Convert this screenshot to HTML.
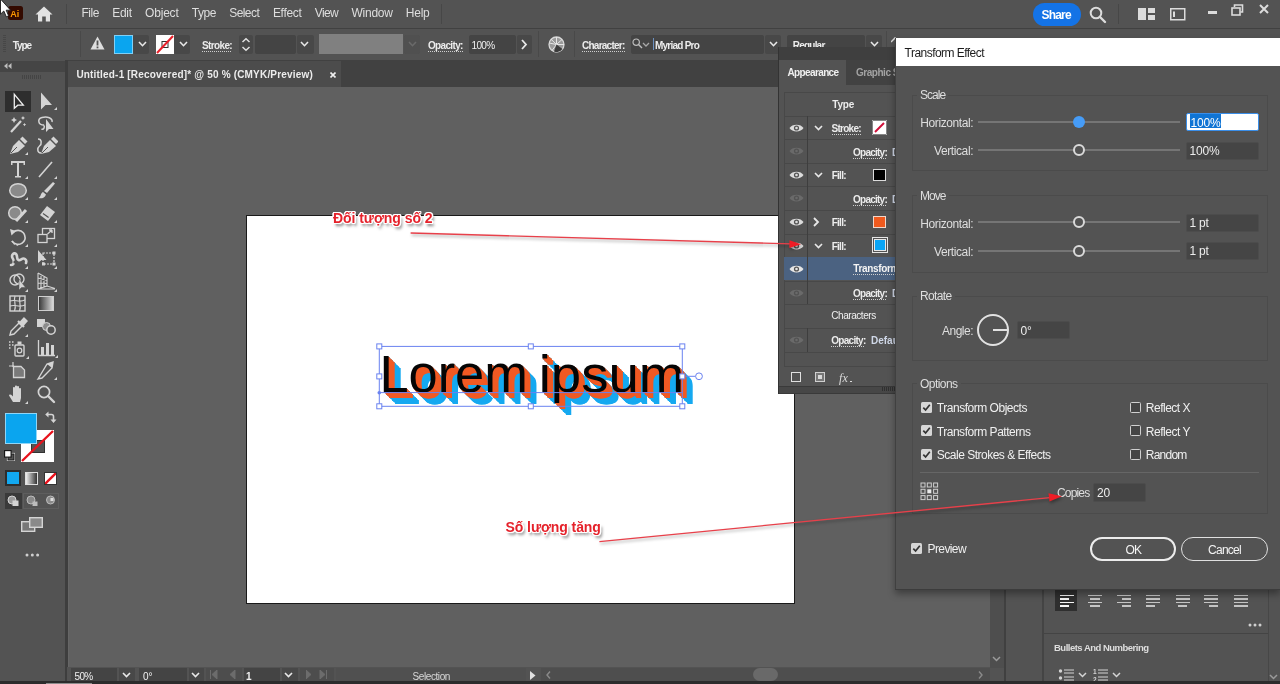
<!DOCTYPE html>
<html><head><meta charset="utf-8"><title>Illustrator</title>
<style>
*{box-sizing:border-box;margin:0;padding:0}
html,body{width:1280px;height:684px;overflow:hidden;background:#535353;font-family:"Liberation Sans","DejaVu Sans",sans-serif;color:#e6e6e6;font-size:11px}
.abs{position:absolute}
#root{position:relative;width:1280px;height:684px;overflow:hidden;background:#535353;will-change:transform}
/* menubar */
#menubar{left:0;top:0;width:1280px;height:28px;background:#535353}
#menubar .mi{position:absolute;top:6px;font-size:12px;line-height:14px;color:#e4e4e4;letter-spacing:-0.55px}
/* control bar */
#ctrl{left:0;top:28px;width:1280px;height:33px;background:#535353;border-bottom:1px solid #3c3c3c}
.lbl{position:absolute;font-size:10px;font-weight:bold;color:#ececec;letter-spacing:-0.65px;white-space:nowrap}
.dot{border-bottom:1px dotted #cfcfcf}
.fld{position:absolute;background:#454545;border-radius:2px}
/* tab strip */
#tabs{left:67px;top:60px;width:1213px;height:28px;background:#414141;border-bottom:1.5px solid #3e3e3e}
#tab1{left:0;top:0;width:282px;height:27px;background:#535353}
/* canvas */
#canvas{left:67px;top:87px;width:923px;height:580px;background:#606060}
#tools{left:0;top:60px;width:65px;height:624px;background:#535353}
</style></head>
<body><div id="root">
<div id="menubar" class="abs">
<span class="abs" style="left:81.40px;top:7.34px;font-size:12px;line-height:12px;font-weight:400;color:#dedede;letter-spacing:-0.461px;white-space:pre;">File</span>
<span class="abs" style="left:112.20px;top:7.34px;font-size:12px;line-height:12px;font-weight:400;color:#dedede;letter-spacing:-0.297px;white-space:pre;">Edit</span>
<span class="abs" style="left:145.00px;top:7.34px;font-size:12px;line-height:12px;font-weight:400;color:#dedede;letter-spacing:-0.181px;white-space:pre;">Object</span>
<span class="abs" style="left:191.80px;top:7.34px;font-size:12px;line-height:12px;font-weight:400;color:#dedede;letter-spacing:-0.454px;white-space:pre;">Type</span>
<span class="abs" style="left:229.20px;top:7.34px;font-size:12px;line-height:12px;font-weight:400;color:#dedede;letter-spacing:-0.560px;white-space:pre;">Select</span>
<span class="abs" style="left:272.95px;top:7.34px;font-size:12px;line-height:12px;font-weight:400;color:#dedede;letter-spacing:-0.336px;white-space:pre;">Effect</span>
<span class="abs" style="left:314.70px;top:7.34px;font-size:12px;line-height:12px;font-weight:400;color:#dedede;letter-spacing:-0.599px;white-space:pre;">View</span>
<span class="abs" style="left:351.40px;top:7.34px;font-size:12px;line-height:12px;font-weight:400;color:#dedede;letter-spacing:-0.215px;white-space:pre;">Window</span>
<span class="abs" style="left:405.80px;top:7.34px;font-size:12px;line-height:12px;font-weight:400;color:#dedede;letter-spacing:-0.247px;white-space:pre;">Help</span>
<svg class="abs" style="left:8px;top:6px" width="15" height="14" viewBox="0 0 15 14"><rect width="15" height="14" rx="2.5" fill="#330a00"/><text x="2.3" y="10.8" font-family="Liberation Sans,sans-serif" font-weight="bold" font-size="9" fill="#ff9a00">Ai</text></svg>
<svg class="abs" style="left:35px;top:6px" width="18" height="16" viewBox="0 0 18 16"><path d="M9 0.5 L17.5 8.5 H15 V15.5 H10.8 V10.5 H7.2 V15.5 H3 V8.5 H0.5 Z" fill="#e2e2e2"/></svg>
<div class="abs" style="left:66px;top:4px;width:1px;height:20px;background:#474747"></div>
<div class="abs" style="left:441px;top:4px;width:1px;height:20px;background:#474747"></div>
<div class="abs" style="left:1033px;top:2.5px;width:47.5px;height:23.5px;border-radius:12px;background:#1473e6"></div><span class="abs" style="left:1041.50px;top:9.24px;font-size:12px;line-height:12px;font-weight:700;color:#fff;letter-spacing:-0.812px;white-space:pre;">Share</span>
<svg class="abs" style="left:1088px;top:5px" width="20" height="20" viewBox="0 0 20 20"><circle cx="8" cy="8" r="5.3" fill="none" stroke="#dcdcdc" stroke-width="2"/><path d="M12 12 L17 17" stroke="#dcdcdc" stroke-width="2.4" stroke-linecap="round"/></svg>
<div class="abs" style="left:1118px;top:4px;width:1px;height:20px;background:#474747"></div>
<svg class="abs" style="left:1138px;top:8px" width="18" height="13" viewBox="0 0 18 13"><rect x="0" y="0" width="8" height="12" fill="#dcdcdc"/><rect x="10" y="0" width="7" height="5" fill="#dcdcdc"/><rect x="10" y="7" width="7" height="5" fill="#dcdcdc"/></svg>
<svg class="abs" style="left:1170px;top:8px" width="16" height="13" viewBox="0 0 16 13"><rect x="0.75" y="0.75" width="14" height="11" fill="none" stroke="#dcdcdc" stroke-width="1.5"/><rect x="3" y="3.5" width="2" height="5.5" fill="#dcdcdc"/></svg>
<div class="abs" style="left:1208px;top:11px;width:9px;height:3px;background:#dcdcdc"></div>
<svg class="abs" style="left:1231px;top:4px" width="13" height="12" viewBox="0 0 13 12"><path d="M3.5 3 V1 H11.5 V8 H9.5" fill="none" stroke="#dcdcdc" stroke-width="1.6"/><rect x="1" y="4" width="8" height="7" fill="none" stroke="#dcdcdc" stroke-width="1.6"/></svg>
<svg class="abs" style="left:1259px;top:4px" width="10" height="10" viewBox="0 0 10 10"><path d="M1 1 L9 9 M9 1 L1 9" stroke="#dcdcdc" stroke-width="2"/></svg>
</div>
<svg class="abs" style="left:0;top:0;z-index:50" width="14" height="20" viewBox="0 0 14 20"><path d="M0.5 -1 V14.2 L3.8 11 L6.3 16.8 L8.6 15.8 L6.2 10.2 H10.6 Z" fill="#fff" stroke="#1a1a1a" stroke-width=".9"/></svg>

<div id="ctrl" class="abs"><div class="abs" style="left:0;top:0;width:1280px;height:1px;background:#414141"></div>

<div class="abs" style="left:3px;top:7px;width:3px;height:17px;background:repeating-linear-gradient(#474747 0 1px,#535353 1px 2px)"></div>
<div class="abs" style="left:80px;top:3px;width:1px;height:26px;background:#494949"></div>
<svg class="abs" style="left:90px;top:8px" width="15" height="14" viewBox="0 0 15 14"><path d="M7.5 0.5 L14.5 13.5 H0.5 Z" fill="#dedede"/><rect x="6.6" y="4.5" width="1.8" height="5" fill="#535353"/><rect x="6.6" y="10.5" width="1.8" height="1.8" fill="#535353"/></svg>
<div class="abs" style="left:114px;top:7px;width:19px;height:19px;background:#0aa5ef;border:1px solid #7fd0f7"></div>
<div class="fld" style="left:133px;top:7px;width:16px;height:19px;background:#484848"></div><svg class="abs" style="left:137.5px;top:13.3px" width="9" height="7" viewBox="-1 -1 9 7"><path d="M0 0 L3.5 3.7 L7 0" fill="none" stroke="#e8e8e8" stroke-width="1.6"/></svg>
<svg class="abs" style="left:156px;top:7px" width="18" height="19" viewBox="0 0 18 19"><rect width="18" height="19" fill="#fff"/><rect x="6" y="6.5" width="6" height="6" fill="none" stroke="#333" stroke-width="1"/><path d="M1 18 L17 1" stroke="#e8202a" stroke-width="2"/></svg>
<div class="fld" style="left:174px;top:7px;width:16px;height:19px;background:#484848"></div><svg class="abs" style="left:178.5px;top:13.3px" width="9" height="7" viewBox="-1 -1 9 7"><path d="M0 0 L3.5 3.7 L7 0" fill="none" stroke="#e8e8e8" stroke-width="1.6"/></svg>
<div class="fld" style="left:239px;top:7px;width:14px;height:19px;background:#484848"></div>
<svg class="abs" style="left:241px;top:9px" width="10" height="15" viewBox="0 0 10 15"><path d="M1.5 5 L5 1.8 L8.5 5 M1.5 10 L5 13.2 L8.5 10" fill="none" stroke="#e0e0e0" stroke-width="1.5"/></svg>
<div class="fld" style="left:255px;top:7px;width:41px;height:19px;background:#444"></div>
<div class="fld" style="left:297px;top:7px;width:17px;height:19px;background:#484848"></div><svg class="abs" style="left:299.5px;top:13.3px" width="9" height="7" viewBox="-1 -1 9 7"><path d="M0 0 L3.5 3.7 L7 0" fill="none" stroke="#e8e8e8" stroke-width="1.6"/></svg>
<div class="abs" style="left:319px;top:6px;width:84px;height:20px;background:#808080"></div>
<div class="fld" style="left:404px;top:7px;width:16px;height:19px;background:#505050"></div><svg class="abs" style="left:407.5px;top:13.3px" width="9" height="7" viewBox="-1 -1 9 7"><path d="M0 0 L3.5 3.7 L7 0" fill="none" stroke="#6a6a6a" stroke-width="1.6"/></svg>
<div class="fld" style="left:469px;top:7px;width:47px;height:19px;background:#444"></div>
<div class="fld" style="left:517px;top:7px;width:15px;height:19px;background:#484848"></div>
<svg class="abs" style="left:521px;top:11px" width="7" height="11" viewBox="0 0 7 11"><path d="M1 1 L5 5.5 L1 10" fill="none" stroke="#e8e8e8" stroke-width="1.8"/></svg>
<div class="abs" style="left:538px;top:3px;width:1px;height:26px;background:#494949"></div>
<svg class="abs" style="left:548px;top:8px" width="17" height="17" viewBox="0 0 17 17"><circle cx="8.5" cy="8.5" r="7.5" fill="#9a9a9a" stroke="#d8d8d8" stroke-width="1.3"/><path d="M8.5 8.5 L8.5 1 M8.5 8.5 L14 3.5 M8.5 8.5 L16 8.5 M8.5 8.5 L3 3.2 M8.5 8.5 L1.2 7 M8.5 8.5 L4 14.5" stroke="#e6e6e6" stroke-width="1"/><path d="M8.5 8.5 L14.5 13 A7.5 7.5 0 0 1 6 15.6 Z" fill="#3c3c3c"/></svg>
<div class="abs" style="left:574px;top:3px;width:1px;height:26px;background:#494949"></div>
<div class="fld" style="left:631px;top:7px;width:133px;height:19px;background:#444"></div>
<svg class="abs" style="left:632px;top:10px" width="11" height="11" viewBox="0 0 11 11"><circle cx="4.2" cy="4.2" r="3.2" fill="none" stroke="#bdbdbd" stroke-width="1.2"/><path d="M6.5 6.5 L10 10" stroke="#bdbdbd" stroke-width="1.4"/></svg><svg class="abs" style="left:642px;top:14px" width="8" height="6" viewBox="-1 -1 8 6"><path d="M0 0 L3.0 3 L6 0" fill="none" stroke="#a8a8a8" stroke-width="1.3"/></svg>
<div class="abs" style="left:653px;top:10px;width:1px;height:12px;background:#6a8fc0"></div>
<div class="fld" style="left:765px;top:7px;width:16px;height:19px;background:#484848"></div><svg class="abs" style="left:768.5px;top:13.3px" width="9" height="7" viewBox="-1 -1 9 7"><path d="M0 0 L3.5 3.7 L7 0" fill="none" stroke="#e8e8e8" stroke-width="1.6"/></svg>
<div class="fld" style="left:787px;top:7px;width:78px;height:19px;background:#444"></div>
<div class="fld" style="left:866px;top:7px;width:16px;height:19px;background:#484848"></div><svg class="abs" style="left:869.5px;top:13.3px" width="9" height="7" viewBox="-1 -1 9 7"><path d="M0 0 L3.5 3.7 L7 0" fill="none" stroke="#e8e8e8" stroke-width="1.6"/></svg>
<div class="abs" style="left:886px;top:3px;width:1px;height:26px;background:#494949"></div>
<svg class="abs" style="left:891px;top:9px" width="8" height="6" viewBox="0 0 8 6"><path d="M0 5 L4 1 L8 5" fill="none" stroke="#d8d8d8" stroke-width="1.5"/></svg>
<span class="abs" style="left:12.80px;top:13.23px;font-size:10px;line-height:10px;font-weight:700;color:#ececec;letter-spacing:-1.102px;white-space:pre;">Type</span>
<span class="abs" style="left:202.00px;top:13.23px;font-size:10px;line-height:10px;font-weight:700;color:#ececec;letter-spacing:-0.636px;white-space:pre;">Stroke:</span><div class="abs" style="left:202.0px;top:23.0px;width:30.0px;height:1px;background:repeating-linear-gradient(90deg,#cfcfcf 0 1px,transparent 1px 2px)"></div>
<span class="abs" style="left:428.00px;top:13.23px;font-size:10px;line-height:10px;font-weight:700;color:#ececec;letter-spacing:-0.664px;white-space:pre;">Opacity:</span><div class="abs" style="left:428.0px;top:23.0px;width:34.7px;height:1px;background:repeating-linear-gradient(90deg,#cfcfcf 0 1px,transparent 1px 2px)"></div>
<span class="abs" style="left:471.50px;top:13.23px;font-size:10px;line-height:10px;font-weight:400;color:#f0f0f0;letter-spacing:-0.670px;white-space:pre;">100%</span>
<span class="abs" style="left:582.00px;top:13.23px;font-size:10px;line-height:10px;font-weight:700;color:#ececec;letter-spacing:-0.753px;white-space:pre;">Character:</span><div class="abs" style="left:582.0px;top:23.0px;width:42.5px;height:1px;background:repeating-linear-gradient(90deg,#cfcfcf 0 1px,transparent 1px 2px)"></div>
<span class="abs" style="left:655.00px;top:13.23px;font-size:10px;line-height:10px;font-weight:700;color:#ececec;letter-spacing:-0.769px;white-space:pre;">Myriad Pro</span>
<span class="abs" style="left:792.80px;top:13.23px;font-size:10px;line-height:10px;font-weight:700;color:#ececec;letter-spacing:-0.791px;white-space:pre;">Regular</span>
</div>

<div id="tabs" class="abs">
<div id="tab1" class="abs" style="left:1px;top:1px;width:273px;height:25.5px;background:#4c4c4c"></div>
<span class="abs" style="left:9.40px;top:9.83px;font-size:10px;line-height:10px;font-weight:700;color:#ececec;letter-spacing:0.188px;white-space:pre;">Untitled-1 [Recovered]* @ 50 % (CMYK/Preview)</span><svg class="abs" style="left:262.5px;top:11.5px" width="6" height="6" viewBox="0 0 6 6"><path d="M0.5 0.5 L5.5 5.5 M5.5 0.5 L0.5 5.5" stroke="#f0f0f0" stroke-width="1.6"/></svg>
</div>

<div id="canvas" class="abs">
<div class="abs" style="left:179px;top:128px;width:549px;height:389px;background:#fff;border:1px solid #1a1a1a"></div>
<svg class="abs" style="left:300px;top:240px" width="420" height="100" viewBox="367 327 420 100" font-family="Liberation Sans, sans-serif" font-size="52.4">
<g transform="translate(379.4,392.2) scale(1,1)"><text x="12.00" y="12.00" fill="#16a9f0">Lorem</text><text fill="#16a9f0" transform="translate(171.30,12.00) scale(1.042,1)">ipsum</text><text x="11.40" y="11.40" fill="#16a9f0">Lorem</text><text fill="#16a9f0" transform="translate(170.70,11.40) scale(1.042,1)">ipsum</text><text x="10.80" y="10.80" fill="#16a9f0">Lorem</text><text fill="#16a9f0" transform="translate(170.10,10.80) scale(1.042,1)">ipsum</text><text x="10.20" y="10.20" fill="#16a9f0">Lorem</text><text fill="#16a9f0" transform="translate(169.50,10.20) scale(1.042,1)">ipsum</text><text x="9.60" y="9.60" fill="#16a9f0">Lorem</text><text fill="#16a9f0" transform="translate(168.90,9.60) scale(1.042,1)">ipsum</text><text x="9.00" y="9.00" fill="#16a9f0">Lorem</text><text fill="#16a9f0" transform="translate(168.30,9.00) scale(1.042,1)">ipsum</text><text x="8.40" y="8.40" fill="#16a9f0">Lorem</text><text fill="#16a9f0" transform="translate(167.70,8.40) scale(1.042,1)">ipsum</text><text x="7.80" y="7.80" fill="#16a9f0">Lorem</text><text fill="#16a9f0" transform="translate(167.10,7.80) scale(1.042,1)">ipsum</text><text x="7.20" y="7.20" fill="#16a9f0">Lorem</text><text fill="#16a9f0" transform="translate(166.50,7.20) scale(1.042,1)">ipsum</text><text x="6.60" y="6.60" fill="#16a9f0">Lorem</text><text fill="#16a9f0" transform="translate(165.90,6.60) scale(1.042,1)">ipsum</text><text x="6.00" y="6.00" fill="#16a9f0">Lorem</text><text fill="#16a9f0" transform="translate(165.30,6.00) scale(1.042,1)">ipsum</text><text x="5.40" y="5.40" fill="#16a9f0">Lorem</text><text fill="#16a9f0" transform="translate(164.70,5.40) scale(1.042,1)">ipsum</text><text x="4.80" y="4.80" fill="#16a9f0">Lorem</text><text fill="#16a9f0" transform="translate(164.10,4.80) scale(1.042,1)">ipsum</text><text x="4.20" y="4.20" fill="#16a9f0">Lorem</text><text fill="#16a9f0" transform="translate(163.50,4.20) scale(1.042,1)">ipsum</text><text x="3.60" y="3.60" fill="#16a9f0">Lorem</text><text fill="#16a9f0" transform="translate(162.90,3.60) scale(1.042,1)">ipsum</text><text x="3.00" y="3.00" fill="#16a9f0">Lorem</text><text fill="#16a9f0" transform="translate(162.30,3.00) scale(1.042,1)">ipsum</text><text x="2.40" y="2.40" fill="#16a9f0">Lorem</text><text fill="#16a9f0" transform="translate(161.70,2.40) scale(1.042,1)">ipsum</text><text x="1.80" y="1.80" fill="#16a9f0">Lorem</text><text fill="#16a9f0" transform="translate(161.10,1.80) scale(1.042,1)">ipsum</text><text x="1.20" y="1.20" fill="#16a9f0">Lorem</text><text fill="#16a9f0" transform="translate(160.50,1.20) scale(1.042,1)">ipsum</text><text x="0.60" y="0.60" fill="#16a9f0">Lorem</text><text fill="#16a9f0" transform="translate(159.90,0.60) scale(1.042,1)">ipsum</text><text x="6.00" y="6.00" fill="#f15a24">Lorem</text><text fill="#f15a24" transform="translate(165.30,6.00) scale(1.042,1)">ipsum</text><text x="5.40" y="5.40" fill="#f15a24">Lorem</text><text fill="#f15a24" transform="translate(164.70,5.40) scale(1.042,1)">ipsum</text><text x="4.80" y="4.80" fill="#f15a24">Lorem</text><text fill="#f15a24" transform="translate(164.10,4.80) scale(1.042,1)">ipsum</text><text x="4.20" y="4.20" fill="#f15a24">Lorem</text><text fill="#f15a24" transform="translate(163.50,4.20) scale(1.042,1)">ipsum</text><text x="3.60" y="3.60" fill="#f15a24">Lorem</text><text fill="#f15a24" transform="translate(162.90,3.60) scale(1.042,1)">ipsum</text><text x="3.00" y="3.00" fill="#f15a24">Lorem</text><text fill="#f15a24" transform="translate(162.30,3.00) scale(1.042,1)">ipsum</text><text x="2.40" y="2.40" fill="#f15a24">Lorem</text><text fill="#f15a24" transform="translate(161.70,2.40) scale(1.042,1)">ipsum</text><text x="1.80" y="1.80" fill="#f15a24">Lorem</text><text fill="#f15a24" transform="translate(161.10,1.80) scale(1.042,1)">ipsum</text><text x="1.20" y="1.20" fill="#f15a24">Lorem</text><text fill="#f15a24" transform="translate(160.50,1.20) scale(1.042,1)">ipsum</text><text x="0.60" y="0.60" fill="#f15a24">Lorem</text><text fill="#f15a24" transform="translate(159.90,0.60) scale(1.042,1)">ipsum</text><text x="0.00" y="0.00" fill="#050505">Lorem</text><text fill="#050505" transform="translate(159.30,0.00) scale(1.042,1)">ipsum</text></g>
<rect x="379.3" y="346.4" width="302.99999999999994" height="59.900000000000034" fill="none" stroke="#6a82f0" stroke-width="1"/>
<path d="M379.3 392.6 H682.3 M685.3 376.3 H695.4" stroke="#6a82f0" stroke-width="1" fill="none"/>
<circle cx="699" cy="376.3" r="3.4" fill="#fff" stroke="#6a82f0" stroke-width="1"/>
<circle cx="379.3" cy="392.8" r="1.8" fill="#6a82f0"/>
<rect x="376.8" y="343.9" width="5" height="5" fill="#fff" stroke="#6a82f0" stroke-width="1"/><rect x="376.8" y="373.9" width="5" height="5" fill="#fff" stroke="#6a82f0" stroke-width="1"/><rect x="376.8" y="403.8" width="5" height="5" fill="#fff" stroke="#6a82f0" stroke-width="1"/><rect x="528.3" y="343.9" width="5" height="5" fill="#fff" stroke="#6a82f0" stroke-width="1"/><rect x="528.3" y="403.8" width="5" height="5" fill="#fff" stroke="#6a82f0" stroke-width="1"/><rect x="679.8" y="343.9" width="5" height="5" fill="#fff" stroke="#6a82f0" stroke-width="1"/><rect x="679.8" y="373.9" width="5" height="5" fill="#fff" stroke="#6a82f0" stroke-width="1"/><rect x="679.8" y="403.8" width="5" height="5" fill="#fff" stroke="#6a82f0" stroke-width="1"/>
</svg>
</div>

<div id="tools" class="abs">
<div class="abs" style="left:0;top:1px;width:65px;height:11px;background:#454545"></div>
<div class="abs" style="left:65px;top:0;width:3px;height:624px;background:#3e3e3e"></div><div class="abs" style="left:68px;top:28px;width:1px;height:580px;background:#666"></div>
<svg class="abs" style="left:4px;top:3px" width="8" height="6" viewBox="0 0 8 6"><path d="M3.5 0 V6 L0 3 Z M7.5 0 V6 L4 3 Z" fill="#bdbdbd"/></svg>
<div class="abs" style="left:22px;top:15px;width:19px;height:4px;background:repeating-linear-gradient(90deg,#444 0 1px,#535353 1px 2px)"></div>
<div class="abs" style="left:5px;top:31px;width:26px;height:21px;background:#2e2e2e"></div><svg class="abs" style="left:6.0px;top:30.0px" width="24" height="22" viewBox="0 0 24 22"><path d="M8.3 4.3 V18.3 L11.8 15.2 H17.3 Z" fill="none" stroke="#f0f0f0" stroke-width="1.3" stroke-linejoin="miter"/></svg><svg class="abs" style="left:34.0px;top:30.0px" width="24" height="22" viewBox="0 0 24 22"><path d="M7 2.5 V19.5 L11.5 15 H18 Z" fill="#d4d4d4"/><path d="M23 17 V20 H20 Z" fill="#d4d4d4"/></svg><svg class="abs" style="left:6.0px;top:53.0px" width="24" height="22" viewBox="0 0 24 22"><path d="M5 19 L15 8" stroke="#d4d4d4" stroke-width="2.2"/><path d="M8 4 l1 2 2 1 -2 1 -1 2 -1 -2 -2 -1 2 -1z M17 3 l.7 1.3 1.3 .7 -1.3 .7 -.7 1.3 -.7 -1.3 -1.3 -.7 1.3 -.7z M18.5 10 l.6 1 1 .6 -1 .6 -.6 1 -.6 -1 -1 -.6 1 -.6z" fill="#d4d4d4"/></svg><svg class="abs" style="left:34.0px;top:53.0px" width="24" height="22" viewBox="0 0 24 22"><path d="M10 12 C4 12 3 6 8 4.5 C13 3 19 5 18 9 M9.5 12 c2 2 0 5 -2 4" fill="none" stroke="#d4d4d4" stroke-width="1.5"/><path d="M12 6 V19 L15 16 H19.5 Z" fill="#d4d4d4"/></svg><svg class="abs" style="left:6.0px;top:75.0px" width="24" height="22" viewBox="0 0 24 22"><path d="M4 19 L7 11 L13 5 L19 11 L12 17 Z" fill="#d4d4d4"/><path d="M14 4 L16.5 1.5 L21.5 6.5 L19 9 Z" fill="#d4d4d4"/><path d="M5 18 L11 12" stroke="#535353" stroke-width="1"/><path d="M22 17 V20 H19 Z" fill="#d4d4d4"/></svg><svg class="abs" style="left:34.0px;top:75.0px" width="24" height="22" viewBox="0 0 24 22"><g transform="translate(3,0)"><path d="M4 19 L7 11 L13 5 L19 11 L12 17 Z" fill="#d4d4d4"/><path d="M14 4 L16.5 1.5 L21.5 6.5 L19 9 Z" fill="#d4d4d4"/><path d="M5 18 L11 12" stroke="#535353" stroke-width="1"/></g><path d="M4 4 C8 4 8 9 5.5 11 C3 13 3 18 7 18" fill="none" stroke="#d4d4d4" stroke-width="1.5"/></svg><svg class="abs" style="left:6.0px;top:98.0px" width="24" height="22" viewBox="0 0 24 22"><path d="M5 3 H19 V7 H17.5 V5 H13 V18 H15 V19.5 H9 V18 H11 V5 H6.5 V7 H5 Z" fill="#d4d4d4"/><path d="M22 18 V21 H19 Z" fill="#d4d4d4"/></svg><svg class="abs" style="left:34.0px;top:98.0px" width="24" height="22" viewBox="0 0 24 22"><path d="M5 19 L18 4" stroke="#d4d4d4" stroke-width="1.6"/><path d="M23 18 V21 H20 Z" fill="#d4d4d4"/></svg><svg class="abs" style="left:6.0px;top:120.0px" width="24" height="22" viewBox="0 0 24 22"><ellipse cx="12" cy="10.5" rx="8.3" ry="6.8" fill="#8a8a8a" stroke="#d4d4d4" stroke-width="1.5"/><path d="M22 17 V20 H19 Z" fill="#d4d4d4"/></svg><svg class="abs" style="left:34.0px;top:120.0px" width="24" height="22" viewBox="0 0 24 22"><path d="M19 2 L21 3.5 L13 13 L10 11 Z" fill="#d4d4d4"/><path d="M9 12 L12 14.5 C11 18 7 19 4.5 18 C7 17 6.5 13 9 12 Z" fill="#d4d4d4"/><path d="M23 17 V20 H20 Z" fill="#d4d4d4"/></svg><svg class="abs" style="left:6.0px;top:143.0px" width="24" height="22" viewBox="0 0 24 22"><circle cx="9" cy="10" r="6.3" fill="#8a8a8a" stroke="#d4d4d4" stroke-width="1.5"/><path d="M10 18 L20 7" stroke="#d4d4d4" stroke-width="3"/><path d="M22 17 V20 H19 Z" fill="#d4d4d4"/></svg><svg class="abs" style="left:34.0px;top:143.0px" width="24" height="22" viewBox="0 0 24 22"><path d="M13 3 L21 9 L14 18 L6 12 Z" fill="#d4d4d4"/><path d="M7.2 12.8 L12.8 17" stroke="#535353" stroke-width="1.2" transform="translate(1.8,-2.4)"/><path d="M23 17 V20 H20 Z" fill="#d4d4d4"/></svg><svg class="abs" style="left:6.0px;top:166.0px" width="24" height="22" viewBox="0 0 24 22"><path d="M7 6.5 A7 7 0 1 1 6 15" fill="none" stroke="#d4d4d4" stroke-width="1.6" stroke-dasharray="14 0"/><path d="M6 15 A7 7 0 0 0 12 19" fill="none" stroke="#d4d4d4" stroke-width="1.4" stroke-dasharray="1.5 1.5"/><path d="M4 3 L10 5 L5.5 9.5 Z" fill="#d4d4d4"/><path d="M22 18 V21 H19 Z" fill="#d4d4d4"/></svg><svg class="abs" style="left:34.0px;top:166.0px" width="24" height="22" viewBox="0 0 24 22"><rect x="8.5" y="2.5" width="12" height="10" fill="none" stroke="#d4d4d4" stroke-width="1.3"/><rect x="4" y="8.5" width="9" height="8" fill="#535353" stroke="#d4d4d4" stroke-width="1.3"/><path d="M13.5 8 L18 4 M18 4 h-3 M18 4 v3" stroke="#d4d4d4" stroke-width="1.3" fill="none"/><path d="M23 18 V21 H20 Z" fill="#d4d4d4"/></svg><svg class="abs" style="left:6.0px;top:188.0px" width="24" height="22" viewBox="0 0 24 22"><path d="M5 17 C9 17 8 12 6.5 10 C5 7 8 4 10 6 C12 8 10 11 12.5 12 C15 13 16 9 19 11 C21 12.5 20 15 20 15" fill="none" stroke="#d4d4d4" stroke-width="2.6" stroke-linecap="round"/><circle cx="9" cy="14" r="1.6" fill="#535353"/><path d="M22 18 V21 H19 Z" fill="#d4d4d4"/></svg><svg class="abs" style="left:34.0px;top:188.0px" width="24" height="22" viewBox="0 0 24 22"><rect x="9" y="5" width="11" height="11" fill="none" stroke="#d4d4d4" stroke-width="1.2" stroke-dasharray="2 1"/><path d="M4 2 V15 L7.5 12 H12.5 Z" fill="#d4d4d4"/><rect x="18.5" y="3.5" width="3" height="3" fill="#d4d4d4"/><rect x="18.5" y="14.5" width="3" height="3" fill="#d4d4d4"/><rect x="8" y="14.5" width="3" height="3" fill="#d4d4d4"/><path d="M23 18 V21 H20 Z" fill="#d4d4d4"/></svg><svg class="abs" style="left:6.0px;top:211.0px" width="24" height="22" viewBox="0 0 24 22"><circle cx="9" cy="9" r="5" fill="none" stroke="#d4d4d4" stroke-width="1.4"/><circle cx="13" cy="8" r="5" fill="none" stroke="#d4d4d4" stroke-width="1.4"/><path d="M13 8 V19 L15.5 16.5 H19.5 Z" fill="#d4d4d4" stroke="#535353" stroke-width=".5"/><path d="M22 18 V21 H19 Z" fill="#d4d4d4"/></svg><svg class="abs" style="left:34.0px;top:211.0px" width="24" height="22" viewBox="0 0 24 22"><path d="M4 2 V18 H21 M4 2 L13 7 V15 L4 18 M7 3.7 V17 M10 5.3 V16 M4 7 L13 9.5 M4 12 L13 12.5 M13 15 L21 17.5" fill="none" stroke="#d4d4d4" stroke-width="1.1"/><path d="M23 18 V21 H20 Z" fill="#d4d4d4"/></svg><svg class="abs" style="left:6.0px;top:233.0px" width="24" height="22" viewBox="0 0 24 22"><rect x="4" y="3" width="15" height="15" fill="none" stroke="#d4d4d4" stroke-width="1.4"/><path d="M4 8 C9 6 13 10 19 7 M4 13 C9 11 13 15 19 12 M9 3 C7 8 11 12 8.5 18 M14 3 C12 8 16 12 13.5 18" fill="none" stroke="#d4d4d4" stroke-width="1.2"/></svg><div class="abs" style="left:38px;top:236px;width:16px;height:15px;border:1px solid #cfcfcf;background:linear-gradient(90deg,#3a3a3a,#d8d8d8)"></div><svg class="abs" style="left:6.0px;top:256.0px" width="24" height="22" viewBox="0 0 24 22"><path d="M4 19 L5 15 L13 7 L16 10 L8 18 Z" fill="none" stroke="#d4d4d4" stroke-width="1.4"/><path d="M12 5 L18 11 M14 7 L18 2.5 L20.5 5 L16.5 9.5" stroke="#d4d4d4" stroke-width="2.2" fill="#d4d4d4"/><path d="M22 18 V21 H19 Z" fill="#d4d4d4"/></svg><svg class="abs" style="left:34.0px;top:256.0px" width="24" height="22" viewBox="0 0 24 22"><rect x="3" y="3" width="8" height="8" fill="#d4d4d4"/><circle cx="12.5" cy="10.5" r="4" fill="#8a8a8a" stroke="#d4d4d4" stroke-width="1"/><circle cx="17" cy="14" r="4.2" fill="#535353" stroke="#d4d4d4" stroke-width="1.5"/></svg><svg class="abs" style="left:6.0px;top:278.0px" width="24" height="22" viewBox="0 0 24 22"><rect x="9" y="7" width="9" height="11" rx="1" fill="none" stroke="#d4d4d4" stroke-width="1.4"/><rect x="11.5" y="3.5" width="4" height="3" fill="#d4d4d4"/><circle cx="13.5" cy="12.5" r="2.3" fill="none" stroke="#d4d4d4" stroke-width="1.2"/><path d="M3 4 h1.5 M6 4 h1.5 M3 7 h1.5 M6 7 h1.5 M3 10 h1.5" stroke="#d4d4d4" stroke-width="1.5"/><path d="M23 18 V21 H20 Z" fill="#d4d4d4"/></svg><svg class="abs" style="left:34.0px;top:278.0px" width="24" height="22" viewBox="0 0 24 22"><path d="M4.5 2 V17.5 H21" fill="none" stroke="#d4d4d4" stroke-width="1.3"/><rect x="7" y="9" width="3" height="8" fill="#d4d4d4"/><rect x="12" y="5" width="3" height="12" fill="#d4d4d4"/><rect x="17" y="7" width="3" height="10" fill="#d4d4d4"/><path d="M24 17 V20 H21 Z" fill="#d4d4d4"/></svg><svg class="abs" style="left:6.0px;top:300.0px" width="24" height="22" viewBox="0 0 24 22"><path d="M7 2 V7 M3 6 H8" stroke="#d4d4d4" stroke-width="1.2"/><path d="M7.5 6.5 H15 L18.5 10 V17.5 H7.5 Z" fill="#7a7a7a" stroke="#d4d4d4" stroke-width="1.3"/></svg><svg class="abs" style="left:34.0px;top:300.0px" width="24" height="22" viewBox="0 0 24 22"><path d="M4 19 L13 4 L19 2 L18 8 L8 18 Z" fill="none" stroke="#d4d4d4" stroke-width="1.4"/><path d="M13 4 L19 2 L18 8 Z" fill="#d4d4d4"/><path d="M23 17 V20 H20 Z" fill="#d4d4d4"/></svg><svg class="abs" style="left:6.0px;top:323.0px" width="24" height="22" viewBox="0 0 24 22"><path d="M7 19 L3 12.5 C3 11 5 11 6 12.5 L7 13.5 V5 C7 3.7 9 3.7 9 5 V9.5 V3.5 C9 2.2 11 2.2 11 3.5 V9.5 V4 C11 2.7 13 2.7 13 4 V10 V6 C13 4.8 15 4.8 15 6 V15 L14 19 Z" fill="#d4d4d4"/><path d="M22 18 V21 H19 Z" fill="#d4d4d4"/></svg><svg class="abs" style="left:34.0px;top:323.0px" width="24" height="22" viewBox="0 0 24 22"><circle cx="10" cy="9" r="5.6" fill="none" stroke="#d4d4d4" stroke-width="1.7"/><path d="M14 13 L20 19" stroke="#d4d4d4" stroke-width="2.4" stroke-linecap="round"/></svg>
<div class="abs" style="left:21px;top:370px;width:33px;height:32px;background:#fff"></div>
<div class="abs" style="left:31px;top:380px;width:14px;height:13px;background:#535353;border:1px solid #333"></div>
<svg class="abs" style="left:21px;top:370px" width="33" height="32" viewBox="0 0 33 32"><path d="M1 31 L32 1" stroke="#e8121c" stroke-width="2.4"/></svg>
<div class="abs" style="left:5px;top:353px;width:32px;height:31px;background:#0aa5ef;border:1px solid #8fd6f8"></div>
<svg class="abs" style="left:45px;top:351px" width="12" height="13" viewBox="0 0 12 13"><path d="M3 3.5 H6.5 Q8.5 3.5 8.5 5.5 V9" fill="none" stroke="#d4d4d4" stroke-width="1.6"/><path d="M3.5 0.5 V6.5 L0.2 3.5 Z M5.5 8.5 H11.5 L8.5 12 Z" fill="#d4d4d4"/></svg>
<svg class="abs" style="left:4px;top:390px" width="11" height="11" viewBox="0 0 11 11"><rect x="3.7" y="3.7" width="6.6" height="6.6" fill="none" stroke="#111" stroke-width="1.4"/><rect x="3.2" y="3.2" width="7.6" height="7.6" fill="none" stroke="#eee" stroke-width=".6"/><rect x="0.6" y="0.6" width="6.5" height="6.5" fill="#fff" stroke="#111" stroke-width="1.1"/></svg>
<div class="abs" style="left:5px;top:410px;width:16px;height:16px;background:#2e2e2e"></div>
<div class="abs" style="left:7px;top:412px;width:12px;height:12px;background:#12a8f0"></div>
<div class="abs" style="left:25px;top:412px;width:13px;height:13px;border:1px solid #ddd;background:linear-gradient(90deg,#eee,#333)"></div>
<svg class="abs" style="left:44px;top:412px" width="13" height="13" viewBox="0 0 13 13"><rect width="13" height="13" fill="#fff"/><path d="M0.5 12.5 L12.5 0.5" stroke="#e8121c" stroke-width="2.4"/><rect x=".5" y=".5" width="12" height="12" fill="none" stroke="#333" stroke-width="1"/></svg>
<div class="abs" style="left:5px;top:433px;width:17px;height:16px;background:#3a3a3a"></div>
<div class="abs" style="left:23px;top:433px;width:36px;height:16px;border:1px solid #5e5e5e"></div>
<svg class="abs" style="left:7px;top:435px" width="13" height="12" viewBox="0 0 13 12"><circle cx="5" cy="5" r="4" fill="#9a9a9a" stroke="#d4d4d4" stroke-width="1"/><rect x="5.5" y="5.5" width="6" height="5.5" fill="#d4d4d4"/></svg>
<svg class="abs" style="left:26px;top:435px" width="13" height="12" viewBox="0 0 13 12"><circle cx="5" cy="5" r="4" fill="#8a8a8a" stroke="#bcbcbc" stroke-width="1"/><rect x="6.5" y="6.5" width="5" height="4.5" fill="#bcbcbc"/></svg>
<svg class="abs" style="left:45px;top:435px" width="13" height="12" viewBox="0 0 13 12"><circle cx="5.5" cy="5" r="4" fill="#8a8a8a" stroke="#bcbcbc" stroke-width="1"/><rect x="5.5" y="3" width="3" height="3" fill="#ddd"/></svg>
<svg class="abs" style="left:21px;top:457px" width="22" height="15" viewBox="0 0 22 15"><rect x="0.7" y="4.7" width="13" height="9.6" fill="#777" stroke="#d4d4d4" stroke-width="1.4"/><rect x="8.7" y="0.7" width="12.6" height="9.6" fill="#8a8a8a" stroke="#d4d4d4" stroke-width="1.4"/></svg>
<svg class="abs" style="left:25px;top:493px" width="15" height="4" viewBox="0 0 15 4"><circle cx="2" cy="2" r="1.5" fill="#cfcfcf"/><circle cx="7.3" cy="2" r="1.5" fill="#cfcfcf"/><circle cx="12.6" cy="2" r="1.5" fill="#cfcfcf"/></svg>
</div>

<div class="abs" style="left:67px;top:667px;width:923px;height:14px;background:#535353"></div>
<div class="abs" style="left:71px;top:668px;width:46px;height:13px;background:#444"></div>
<span class="abs" style="left:74.50px;top:672.24px;font-size:10px;line-height:10px;font-weight:400;color:#f0f0f0;letter-spacing:-0.672px;white-space:pre;">50%</span>
<div class="abs" style="left:119px;top:668px;width:16px;height:13px;background:#484848"></div>
<svg class="abs" style="left:122px;top:672px" width="9" height="6.6" viewBox="-1 -1 9 6.6"><path d="M0 0 L3.5 3.5999999999999996 L7 0" fill="none" stroke="#e8e8e8" stroke-width="1.6"/></svg>
<div class="abs" style="left:139px;top:668px;width:48px;height:13px;background:#444"></div>
<span class="abs" style="left:143.00px;top:672.24px;font-size:10px;line-height:10px;font-weight:400;color:#f0f0f0;letter-spacing:0.000px;white-space:pre;">0°</span>
<div class="abs" style="left:189px;top:668px;width:15px;height:13px;background:#484848"></div>
<svg class="abs" style="left:191px;top:672px" width="9" height="6.6" viewBox="-1 -1 9 6.6"><path d="M0 0 L3.5 3.5999999999999996 L7 0" fill="none" stroke="#e8e8e8" stroke-width="1.6"/></svg>
<div class="abs" style="left:206px;top:668px;width:36px;height:13px;background:#4d4d4d"></div>
<svg class="abs" style="left:210px;top:670px" width="28" height="9" viewBox="0 0 28 9"><path d="M0.5 0 V9 M7 0 V9 L2 4.5 Z M25 0 V9 L20 4.5 Z" fill="#6c6c6c" stroke="#6c6c6c" stroke-width="1"/></svg>
<div class="abs" style="left:244px;top:668px;width:36px;height:13px;background:#444"></div>
<span class="abs" style="left:246.00px;top:672.24px;font-size:10px;line-height:10px;font-weight:700;color:#f0f0f0;letter-spacing:0.000px;white-space:pre;">1</span>
<div class="abs" style="left:282px;top:668px;width:16px;height:13px;background:#484848"></div>
<svg class="abs" style="left:284px;top:672px" width="9" height="6.6" viewBox="-1 -1 9 6.6"><path d="M0 0 L3.5 3.5999999999999996 L7 0" fill="none" stroke="#e8e8e8" stroke-width="1.6"/></svg>
<div class="abs" style="left:300px;top:668px;width:34px;height:13px;background:#4d4d4d"></div>
<svg class="abs" style="left:306px;top:670px" width="22" height="9" viewBox="0 0 22 9"><path d="M0 0 V9 L5 4.5 Z M14 0 V9 L19 4.5 Z M20.5 0 V9" fill="#6c6c6c" stroke="#6c6c6c" stroke-width="1"/></svg>
<div class="abs" style="left:336px;top:668px;width:190px;height:13px;background:#505050"></div>
<span class="abs" style="left:412.50px;top:672.24px;font-size:10px;line-height:10px;font-weight:400;color:#d8d8d8;letter-spacing:-0.405px;white-space:pre;">Selection</span>
<svg class="abs" style="left:530px;top:671px" width="6" height="9" viewBox="0 0 6 9"><path d="M0 0 V9 L5.5 4.5 Z" fill="#e0e0e0"/></svg>
<div class="abs" style="left:541px;top:668px;width:449px;height:13px;background:#4e4e4e"></div>
<svg class="abs" style="left:546px;top:671px" width="5" height="8" viewBox="0 0 5 8"><path d="M4 0.5 L1 4 L4 7.5" fill="none" stroke="#8a8a8a" stroke-width="1.4"/></svg>
<svg class="abs" style="left:978px;top:671px" width="5" height="8" viewBox="0 0 5 8"><path d="M1 0.5 L4 4 L1 7.5" fill="none" stroke="#8a8a8a" stroke-width="1.4"/></svg>
<div class="abs" style="left:753px;top:668px;width:25px;height:13px;border-radius:6.5px;background:#696969"></div>
<div class="abs" style="left:990px;top:87px;width:14px;height:581px;background:#4e4e4e"></div>
<svg class="abs" style="left:992px;top:656px" width="9" height="6.5" viewBox="-1 -1 9 6.5"><path d="M0 0 L3.5 3.5 L7 0" fill="none" stroke="#9a9a9a" stroke-width="1.5"/></svg>
<div class="abs" style="left:1004px;top:60px;width:276px;height:624px;background:#535353"></div>
<div class="abs" style="left:1004px;top:60px;width:2px;height:624px;background:#404040"></div>
<div class="abs" style="left:1042px;top:60px;width:2px;height:624px;background:#444"></div>
<div class="abs" style="left:1044px;top:633px;width:224px;height:1px;background:#444"></div>
<div class="abs" style="left:1268px;top:60px;width:1px;height:624px;background:#474747"></div>
<svg class="abs" style="left:1269px;top:674px" width="9" height="6.5" viewBox="-1 -1 9 6.5"><path d="M0 0 L3.5 3.5 L7 0" fill="none" stroke="#9a9a9a" stroke-width="1.5"/></svg>
<div class="abs" style="left:1055px;top:589px;width:22px;height:22px;background:#2f2f2f"></div>
<div class="abs" style="left:1060px;top:594.5px;width:14px;height:1.6px;background:#f4f4f4"></div><div class="abs" style="left:1060px;top:598px;width:9px;height:1.6px;background:#f4f4f4"></div><div class="abs" style="left:1060px;top:601.5px;width:14px;height:1.6px;background:#f4f4f4"></div><div class="abs" style="left:1060px;top:605px;width:9px;height:1.6px;background:#f4f4f4"></div>
<div class="abs" style="left:1088.0px;top:594.5px;width:14px;height:1.6px;background:#c4c4c4"></div><div class="abs" style="left:1090.0px;top:598px;width:10px;height:1.6px;background:#c4c4c4"></div><div class="abs" style="left:1088.0px;top:601.5px;width:14px;height:1.6px;background:#c4c4c4"></div><div class="abs" style="left:1090.0px;top:605px;width:10px;height:1.6px;background:#c4c4c4"></div>
<div class="abs" style="left:1117px;top:594.5px;width:14px;height:1.6px;background:#c4c4c4"></div><div class="abs" style="left:1122px;top:598px;width:9px;height:1.6px;background:#c4c4c4"></div><div class="abs" style="left:1117px;top:601.5px;width:14px;height:1.6px;background:#c4c4c4"></div><div class="abs" style="left:1122px;top:605px;width:9px;height:1.6px;background:#c4c4c4"></div>
<div class="abs" style="left:1146px;top:594.5px;width:14px;height:1.6px;background:#c4c4c4"></div><div class="abs" style="left:1146px;top:598px;width:14px;height:1.6px;background:#c4c4c4"></div><div class="abs" style="left:1146px;top:601.5px;width:14px;height:1.6px;background:#c4c4c4"></div><div class="abs" style="left:1146px;top:605px;width:9px;height:1.6px;background:#c4c4c4"></div>
<div class="abs" style="left:1175.5px;top:594.5px;width:14px;height:1.6px;background:#c4c4c4"></div><div class="abs" style="left:1175.5px;top:598px;width:14px;height:1.6px;background:#c4c4c4"></div><div class="abs" style="left:1175.5px;top:601.5px;width:14px;height:1.6px;background:#c4c4c4"></div><div class="abs" style="left:1178.0px;top:605px;width:9px;height:1.6px;background:#c4c4c4"></div>
<div class="abs" style="left:1204px;top:594.5px;width:14px;height:1.6px;background:#c4c4c4"></div><div class="abs" style="left:1204px;top:598px;width:14px;height:1.6px;background:#c4c4c4"></div><div class="abs" style="left:1204px;top:601.5px;width:14px;height:1.6px;background:#c4c4c4"></div><div class="abs" style="left:1209px;top:605px;width:9px;height:1.6px;background:#c4c4c4"></div>
<div class="abs" style="left:1233.5px;top:594.5px;width:14px;height:1.6px;background:#c4c4c4"></div><div class="abs" style="left:1233.5px;top:598px;width:14px;height:1.6px;background:#c4c4c4"></div><div class="abs" style="left:1233.5px;top:601.5px;width:14px;height:1.6px;background:#c4c4c4"></div><div class="abs" style="left:1233.5px;top:605px;width:14px;height:1.6px;background:#c4c4c4"></div>
<svg class="abs" style="left:1248px;top:623px" width="14" height="4" viewBox="0 0 14 4"><circle cx="2" cy="2" r="1.5" fill="#cfcfcf"/><circle cx="7" cy="2" r="1.5" fill="#cfcfcf"/><circle cx="12" cy="2" r="1.5" fill="#cfcfcf"/></svg>
<span class="abs" style="left:1054.00px;top:643.16px;font-size:9.5px;line-height:9.5px;font-weight:700;color:#dedede;letter-spacing:-0.510px;white-space:pre;">Bullets And Numbering</span>
<svg class="abs" style="left:1058px;top:668px" width="64" height="14" viewBox="0 0 64 14"><circle cx="2.5" cy="3" r="1.7" fill="#d4d4d4"/><circle cx="2.5" cy="10" r="1.7" fill="#d4d4d4"/><path d="M6 2 H16 M6 5 H16 M6 9 H16 M6 12 H16" stroke="#d4d4d4" stroke-width="1.2"/><path d="M21 5 L24.5 8.5 L28 5" fill="none" stroke="#d4d4d4" stroke-width="1.5"/><path d="M40 2 H50 M40 5 H50 M40 9 H50 M40 12 H50" stroke="#d4d4d4" stroke-width="1.2"/><text x="35" y="6" font-size="6.5" font-weight="bold" fill="#d4d4d4" font-family="Liberation Sans,sans-serif">1</text><text x="35" y="13.5" font-size="6.5" font-weight="bold" fill="#d4d4d4" font-family="Liberation Sans,sans-serif">2</text><path d="M55 5 L58.5 8.5 L62 5" fill="none" stroke="#d4d4d4" stroke-width="1.5"/></svg>
<div class="abs" style="left:0;top:681px;width:1280px;height:3px;background:#2c2c2c"></div>
<div class="abs" style="left:46px;top:683px;width:46px;height:1px;background:#8c8c8c"></div>

<div id="appear" class="abs" style="left:778px;top:47px;width:140px;height:347px;background:#535353;border-left:1px solid #333;overflow:hidden">
<div class="abs" style="left:0;top:0;width:140px;height:13px;background:#3f3f3f"></div>
<div class="abs" style="left:0;top:13px;width:140px;height:25px;background:#424242"></div>
<div class="abs" style="left:0;top:13px;width:67px;height:25px;background:#535353"></div>
<span class="abs" style="left:8.50px;top:20.73px;font-size:10px;line-height:10px;font-weight:700;color:#f0f0f0;letter-spacing:-0.625px;white-space:pre;">Appearance</span>
<span class="abs" style="left:77.00px;top:20.73px;font-size:10px;line-height:10px;font-weight:700;color:#a2a2a2;letter-spacing:-0.472px;white-space:pre;">Graphic S</span>
<div class="abs" style="left:5px;top:45px;width:130px;height:275px;border:1px solid #484848;border-right:none"></div>
<div class="abs" style="left:5px;top:68.6px;width:130px;height:1px;background:#484848"></div>
<div class="abs" style="left:5px;top:92.2px;width:130px;height:1px;background:#484848"></div>
<div class="abs" style="left:5px;top:115.8px;width:130px;height:1px;background:#484848"></div>
<div class="abs" style="left:5px;top:139.4px;width:130px;height:1px;background:#484848"></div>
<div class="abs" style="left:5px;top:163.0px;width:130px;height:1px;background:#484848"></div>
<div class="abs" style="left:5px;top:186.6px;width:130px;height:1px;background:#484848"></div>
<div class="abs" style="left:5px;top:210.2px;width:130px;height:1px;background:#484848"></div>
<div class="abs" style="left:5px;top:233.8px;width:130px;height:1px;background:#484848"></div>
<div class="abs" style="left:5px;top:257.4px;width:130px;height:1px;background:#484848"></div>
<div class="abs" style="left:5px;top:281.0px;width:130px;height:1px;background:#484848"></div>
<div class="abs" style="left:5px;top:304.6px;width:130px;height:1px;background:#484848"></div>
<div class="abs" style="left:5px;top:209.6px;width:130px;height:23.8px;background:#4b6281"></div>
<div class="abs" style="left:28px;top:68.6px;width:1px;height:188.8px;background:#3e3e3e"></div>
<div class="abs" style="left:28px;top:281.0px;width:1px;height:23.6px;background:#3e3e3e"></div>
<span class="abs" style="left:53.30px;top:52.94px;font-size:10px;line-height:10px;font-weight:700;color:#ececec;letter-spacing:-0.177px;white-space:pre;">Type</span>
<svg class="abs" style="left:9.5px;top:75.6px" width="15" height="10" viewBox="0 0 15 10"><path d="M0.5 5 C3 0.5 12 0.5 14.5 5 C12 9.5 3 9.5 0.5 5 Z" fill="#dcdcdc"/><circle cx="7.5" cy="5" r="2.6" fill="#535353"/><circle cx="7.5" cy="5" r="1.3" fill="#dcdcdc"/></svg>
<svg class="abs" style="left:35px;top:77.6px" width="9" height="6.6" viewBox="-1 -1 9 6.6"><path d="M0 0 L3.5 3.5999999999999996 L7 0" fill="none" stroke="#e8e8e8" stroke-width="1.6"/></svg>
<span class="abs" style="left:52.60px;top:76.73px;font-size:10px;line-height:10px;font-weight:700;color:#ececec;letter-spacing:-0.750px;white-space:pre;">Stroke:</span><div class="abs" style="left:52.6px;top:86.5px;width:29.2px;height:1px;background:repeating-linear-gradient(90deg,#cfcfcf 0 1px,transparent 1px 2px)"></div>
<svg class="abs" style="left:93px;top:73px" width="15" height="15" viewBox="0 0 15 15"><rect x=".5" y=".5" width="14" height="14" fill="#fff" stroke="#222" stroke-width="1"/><rect x="0" y="0" width="15" height="15" fill="none" stroke="#e8e8e8" stroke-width="1"/><path d="M3 12 L12 3" stroke="#d0103a" stroke-width="2"/></svg>
<svg class="abs" style="left:9.5px;top:99.2px" width="15" height="10" viewBox="0 0 15 10"><path d="M0.5 5 C3 0.5 12 0.5 14.5 5 C12 9.5 3 9.5 0.5 5 Z" fill="#6a6a6a"/><circle cx="7.5" cy="5" r="2.6" fill="#535353"/><circle cx="7.5" cy="5" r="1.3" fill="#6a6a6a"/></svg>
<span class="abs" style="left:74.00px;top:100.83px;font-size:10px;line-height:10px;font-weight:700;color:#ececec;letter-spacing:-0.752px;white-space:pre;">Opacity:</span><div class="abs" style="left:74.0px;top:110.6px;width:34.0px;height:1px;background:repeating-linear-gradient(90deg,#cfcfcf 0 1px,transparent 1px 2px)"></div>
<span class="abs" style="left:113.00px;top:100.83px;font-size:10px;line-height:10px;font-weight:700;color:#d0d8e8;letter-spacing:0.000px;white-space:pre;">Default</span>
<svg class="abs" style="left:9.5px;top:122.8px" width="15" height="10" viewBox="0 0 15 10"><path d="M0.5 5 C3 0.5 12 0.5 14.5 5 C12 9.5 3 9.5 0.5 5 Z" fill="#dcdcdc"/><circle cx="7.5" cy="5" r="2.6" fill="#535353"/><circle cx="7.5" cy="5" r="1.3" fill="#dcdcdc"/></svg>
<svg class="abs" style="left:35px;top:124.80000000000001px" width="9" height="6.6" viewBox="-1 -1 9 6.6"><path d="M0 0 L3.5 3.5999999999999996 L7 0" fill="none" stroke="#e8e8e8" stroke-width="1.6"/></svg>
<span class="abs" style="left:52.70px;top:124.23px;font-size:10px;line-height:10px;font-weight:700;color:#ececec;letter-spacing:-0.736px;white-space:pre;">Fill:</span>
<div class="abs" style="left:94px;top:122px;width:13px;height:12px;background:#000;border:1px solid #dcdcdc"></div>
<svg class="abs" style="left:9.5px;top:146.4px" width="15" height="10" viewBox="0 0 15 10"><path d="M0.5 5 C3 0.5 12 0.5 14.5 5 C12 9.5 3 9.5 0.5 5 Z" fill="#6a6a6a"/><circle cx="7.5" cy="5" r="2.6" fill="#535353"/><circle cx="7.5" cy="5" r="1.3" fill="#6a6a6a"/></svg>
<span class="abs" style="left:74.00px;top:148.03px;font-size:10px;line-height:10px;font-weight:700;color:#ececec;letter-spacing:-0.752px;white-space:pre;">Opacity:</span><div class="abs" style="left:74.0px;top:157.8px;width:34.0px;height:1px;background:repeating-linear-gradient(90deg,#cfcfcf 0 1px,transparent 1px 2px)"></div>
<span class="abs" style="left:113.00px;top:148.03px;font-size:10px;line-height:10px;font-weight:700;color:#d0d8e8;letter-spacing:0.000px;white-space:pre;">Default</span>
<svg class="abs" style="left:9.5px;top:170.0px" width="15" height="10" viewBox="0 0 15 10"><path d="M0.5 5 C3 0.5 12 0.5 14.5 5 C12 9.5 3 9.5 0.5 5 Z" fill="#dcdcdc"/><circle cx="7.5" cy="5" r="2.6" fill="#535353"/><circle cx="7.5" cy="5" r="1.3" fill="#dcdcdc"/></svg>
<svg class="abs" style="left:34px;top:170.0px" width="7" height="10" viewBox="0 0 7 10"><path d="M1 1 L5 5 L1 9" fill="none" stroke="#e8e8e8" stroke-width="1.8"/></svg>
<span class="abs" style="left:52.70px;top:171.43px;font-size:10px;line-height:10px;font-weight:700;color:#ececec;letter-spacing:-0.736px;white-space:pre;">Fill:</span>
<div class="abs" style="left:94px;top:168.5px;width:13px;height:12px;background:#f05a1e;border:1px solid #f0d8cc"></div>
<svg class="abs" style="left:9.5px;top:193.6px" width="15" height="10" viewBox="0 0 15 10"><path d="M0.5 5 C3 0.5 12 0.5 14.5 5 C12 9.5 3 9.5 0.5 5 Z" fill="#dcdcdc"/><circle cx="7.5" cy="5" r="2.6" fill="#535353"/><circle cx="7.5" cy="5" r="1.3" fill="#dcdcdc"/></svg>
<svg class="abs" style="left:35px;top:195.60000000000002px" width="9" height="6.6" viewBox="-1 -1 9 6.6"><path d="M0 0 L3.5 3.5999999999999996 L7 0" fill="none" stroke="#e8e8e8" stroke-width="1.6"/></svg>
<span class="abs" style="left:52.70px;top:195.03px;font-size:10px;line-height:10px;font-weight:700;color:#ececec;letter-spacing:-0.736px;white-space:pre;">Fill:</span>
<div class="abs" style="left:92.5px;top:189.5px;width:16px;height:16px;border:1px solid #e6e6e6;background:#535353"></div>
<div class="abs" style="left:94.5px;top:191.5px;width:12px;height:12px;border:1px solid #e6e6e6;background:#0aa5f5"></div>
<svg class="abs" style="left:9.5px;top:217.2px" width="15" height="10" viewBox="0 0 15 10"><path d="M0.5 5 C3 0.5 12 0.5 14.5 5 C12 9.5 3 9.5 0.5 5 Z" fill="#e6e6e6"/><circle cx="7.5" cy="5" r="2.6" fill="#535353"/><circle cx="7.5" cy="5" r="1.3" fill="#e6e6e6"/></svg>
<span class="abs" style="left:74.30px;top:216.84px;font-size:10px;line-height:10px;font-weight:700;color:#f4f4f4;letter-spacing:-0.356px;white-space:pre;">Transform</span><div class="abs" style="left:74.3px;top:226.6px;width:45.7px;height:1px;background:repeating-linear-gradient(90deg,#cfcfcf 0 1px,transparent 1px 2px)"></div>
<svg class="abs" style="left:9.5px;top:240.8px" width="15" height="10" viewBox="0 0 15 10"><path d="M0.5 5 C3 0.5 12 0.5 14.5 5 C12 9.5 3 9.5 0.5 5 Z" fill="#6a6a6a"/><circle cx="7.5" cy="5" r="2.6" fill="#535353"/><circle cx="7.5" cy="5" r="1.3" fill="#6a6a6a"/></svg>
<span class="abs" style="left:74.00px;top:242.24px;font-size:10px;line-height:10px;font-weight:700;color:#ececec;letter-spacing:-0.752px;white-space:pre;">Opacity:</span><div class="abs" style="left:74.0px;top:252.0px;width:34.0px;height:1px;background:repeating-linear-gradient(90deg,#cfcfcf 0 1px,transparent 1px 2px)"></div>
<span class="abs" style="left:113.00px;top:242.24px;font-size:10px;line-height:10px;font-weight:700;color:#d0d8e8;letter-spacing:0.000px;white-space:pre;">Default</span>
<span class="abs" style="left:52.30px;top:263.94px;font-size:10px;line-height:10px;font-weight:400;color:#f0f0f0;letter-spacing:-0.451px;white-space:pre;">Characters</span>
<svg class="abs" style="left:9.5px;top:288.0px" width="15" height="10" viewBox="0 0 15 10"><path d="M0.5 5 C3 0.5 12 0.5 14.5 5 C12 9.5 3 9.5 0.5 5 Z" fill="#6a6a6a"/><circle cx="7.5" cy="5" r="2.6" fill="#535353"/><circle cx="7.5" cy="5" r="1.3" fill="#6a6a6a"/></svg>
<span class="abs" style="left:52.30px;top:288.74px;font-size:10px;line-height:10px;font-weight:700;color:#ececec;letter-spacing:-0.727px;white-space:pre;">Opacity:</span><div class="abs" style="left:52.3px;top:298.5px;width:34.2px;height:1px;background:repeating-linear-gradient(90deg,#cfcfcf 0 1px,transparent 1px 2px)"></div>
<span class="abs" style="left:92.00px;top:288.74px;font-size:10px;line-height:10px;font-weight:400;color:#d0d8e8;letter-spacing:0.000px;white-space:pre;font-weight:700;">Default</span>
<div class="abs" style="left:11.5px;top:325px;width:10px;height:10px;border:1.5px solid #e0e0e0"></div>
<div class="abs" style="left:35.5px;top:325px;width:10px;height:10px;border:1.5px solid #d0d0d0;background:#777"></div><div class="abs" style="left:38.5px;top:328px;width:4px;height:4px;background:#d8d8d8"></div>
<span class="abs" style="left:60.00px;top:325.04px;font-size:12px;line-height:12px;font-weight:400;color:#dcdcdc;letter-spacing:0.078px;white-space:pre;font-style:italic;font-family:Liberation Serif,serif;">fx</span>
<div class="abs" style="left:71px;top:333.5px;width:2px;height:1.5px;background:#dcdcdc"></div>
<div class="abs" style="left:0;top:338.5px;width:140px;height:8px;background:#474747;border-top:1px solid #3a3a3a;border-bottom:1px solid #3a3a3a"></div>
<div class="abs" style="left:103px;top:340px;width:13px;height:4px;background:repeating-linear-gradient(90deg,#303030 0 1px,#474747 1px 2px)"></div>
</div>

<div id="dlg" class="abs" style="left:895px;top:38px;width:385px;height:552px;background:#535353;border-left:1px solid #404040;border-bottom:1px solid #3c3c3c;box-shadow:0 4px 7px rgba(0,0,0,.35)">
<div class="abs" style="left:0;top:0;width:384px;height:28px;background:#fff"></div>
<span class="abs" style="left:8.60px;top:8.84px;font-size:12px;line-height:12px;font-weight:400;color:#1c1c1c;letter-spacing:-0.539px;white-space:pre;">Transform Effect</span>
<div class="abs" style="left:15.5px;top:56.8px;width:356.0px;height:76.2px;border:1px solid #4b4b4b"></div><div class="abs" style="left:21px;top:54.8px;width:31.299999999999955px;height:5px;background:#535353"></div><span class="abs" style="left:24.00px;top:51.34px;font-size:12px;line-height:12px;font-weight:400;color:#dedede;letter-spacing:-0.946px;white-space:pre;">Scale</span>
<span class="abs" style="left:24.30px;top:79.44px;font-size:12px;line-height:12px;font-weight:400;color:#dedede;letter-spacing:-0.414px;white-space:pre;">Horizontal:</span>
<div class="abs" style="left:82px;top:83.2px;width:201.5px;height:2px;background:#757575"></div><div class="abs" style="left:177.4000000000001px;top:78.2px;width:12px;height:12px;border-radius:6px;background:#469cf7"></div>
<div class="abs" style="left:289.5px;top:74.5px;width:73px;height:18.5px;background:#fff;border:1px solid #3a8ee8;border-radius:2px"></div>
<div class="abs" style="left:294px;top:75.5px;width:31px;height:14.5px;background:#0f74d4"></div>
<span class="abs" style="left:294.50px;top:78.94px;font-size:12px;line-height:12px;font-weight:400;color:#fff;letter-spacing:-0.176px;white-space:pre;">100%</span>
<span class="abs" style="left:38.00px;top:107.34px;font-size:12px;line-height:12px;font-weight:400;color:#dedede;letter-spacing:-0.399px;white-space:pre;">Vertical:</span>
<div class="abs" style="left:82px;top:111.30000000000001px;width:201.5px;height:2px;background:#757575"></div><div class="abs" style="left:177.4000000000001px;top:106.30000000000001px;width:12px;height:12px;border-radius:6px;background:#535353;border:2px solid #dadada"></div>
<div class="abs" style="left:290px;top:103.5px;width:72.5px;height:18.0px;background:#454545;border:1px solid #4c4c4c;border-radius:2px"></div><span class="abs" style="left:293.50px;top:107.14px;font-size:12px;line-height:12px;font-weight:400;color:#ededed;letter-spacing:0.000px;white-space:pre;letter-spacing:-0.2px;">100%</span>
<div class="abs" style="left:15.5px;top:157px;width:356.0px;height:78px;border:1px solid #4b4b4b"></div><div class="abs" style="left:21px;top:155px;width:31.5px;height:5px;background:#535353"></div><span class="abs" style="left:24.00px;top:151.54px;font-size:12px;line-height:12px;font-weight:400;color:#dedede;letter-spacing:-0.961px;white-space:pre;">Move</span>
<span class="abs" style="left:24.30px;top:179.54px;font-size:12px;line-height:12px;font-weight:400;color:#dedede;letter-spacing:-0.414px;white-space:pre;">Horizontal:</span>
<div class="abs" style="left:82px;top:183.4px;width:201.5px;height:2px;background:#757575"></div><div class="abs" style="left:177.4000000000001px;top:178.4px;width:12px;height:12px;border-radius:6px;background:#535353;border:2px solid #dadada"></div>
<div class="abs" style="left:290px;top:175.5px;width:72.5px;height:18.0px;background:#454545;border:1px solid #4c4c4c;border-radius:2px"></div><span class="abs" style="left:293.50px;top:179.34px;font-size:12px;line-height:12px;font-weight:400;color:#ededed;letter-spacing:0.000px;white-space:pre;letter-spacing:-0.2px;">1 pt</span>
<span class="abs" style="left:38.00px;top:207.54px;font-size:12px;line-height:12px;font-weight:400;color:#dedede;letter-spacing:-0.399px;white-space:pre;">Vertical:</span>
<div class="abs" style="left:82px;top:211.5px;width:201.5px;height:2px;background:#757575"></div><div class="abs" style="left:177.4000000000001px;top:206.5px;width:12px;height:12px;border-radius:6px;background:#535353;border:2px solid #dadada"></div>
<div class="abs" style="left:290px;top:203.5px;width:72.5px;height:18.0px;background:#454545;border:1px solid #4c4c4c;border-radius:2px"></div><span class="abs" style="left:293.50px;top:207.34px;font-size:12px;line-height:12px;font-weight:400;color:#ededed;letter-spacing:0.000px;white-space:pre;letter-spacing:-0.2px;">1 pt</span>
<div class="abs" style="left:15.5px;top:257.5px;width:356.0px;height:65.5px;border:1px solid #4b4b4b"></div><div class="abs" style="left:21px;top:255.5px;width:37.5px;height:5px;background:#535353"></div><span class="abs" style="left:24.00px;top:252.04px;font-size:12px;line-height:12px;font-weight:400;color:#dedede;letter-spacing:-0.643px;white-space:pre;">Rotate</span>
<span class="abs" style="left:46.00px;top:287.34px;font-size:12px;line-height:12px;font-weight:400;color:#dedede;letter-spacing:-0.505px;white-space:pre;">Angle:</span>
<svg class="abs" style="left:79.79999999999995px;top:275.3px" width="34" height="34" viewBox="0 0 34 34"><circle cx="17" cy="17" r="15" fill="none" stroke="#e2e2e2" stroke-width="2"/><path d="M17 17 H32" stroke="#e2e2e2" stroke-width="2"/></svg>
<div class="abs" style="left:120.5px;top:282.5px;width:53.5px;height:18.0px;background:#454545;border:1px solid #4c4c4c;border-radius:2px"></div><span class="abs" style="left:124.50px;top:287.14px;font-size:12px;line-height:12px;font-weight:400;color:#ededed;letter-spacing:0.000px;white-space:pre;letter-spacing:-0.2px;">0°</span>
<div class="abs" style="left:15.5px;top:345.3px;width:356.0px;height:131.2px;border:1px solid #4b4b4b"></div><div class="abs" style="left:21px;top:343.3px;width:43.5px;height:5px;background:#535353"></div><span class="abs" style="left:24.00px;top:339.84px;font-size:12px;line-height:12px;font-weight:400;color:#dedede;letter-spacing:-0.551px;white-space:pre;">Options</span>
<svg class="abs" style="left:24.700000000000045px;top:364.1px" width="11" height="11" viewBox="0 0 11 11"><rect width="11" height="11" rx="1.5" fill="#d6d6d6"/><path d="M2.3 5.6 L4.6 8 L8.8 2.8" fill="none" stroke="#333" stroke-width="1.7"/></svg>
<span class="abs" style="left:40.80px;top:364.44px;font-size:12px;line-height:12px;font-weight:400;color:#f0f0f0;letter-spacing:-0.474px;white-space:pre;">Transform Objects</span>
<svg class="abs" style="left:24.700000000000045px;top:387.3px" width="11" height="11" viewBox="0 0 11 11"><rect width="11" height="11" rx="1.5" fill="#d6d6d6"/><path d="M2.3 5.6 L4.6 8 L8.8 2.8" fill="none" stroke="#333" stroke-width="1.7"/></svg>
<span class="abs" style="left:40.80px;top:387.64px;font-size:12px;line-height:12px;font-weight:400;color:#f0f0f0;letter-spacing:-0.476px;white-space:pre;">Transform Patterns</span>
<svg class="abs" style="left:24.700000000000045px;top:410.9px" width="11" height="11" viewBox="0 0 11 11"><rect width="11" height="11" rx="1.5" fill="#d6d6d6"/><path d="M2.3 5.6 L4.6 8 L8.8 2.8" fill="none" stroke="#333" stroke-width="1.7"/></svg>
<span class="abs" style="left:40.80px;top:411.24px;font-size:12px;line-height:12px;font-weight:400;color:#f0f0f0;letter-spacing:-0.499px;white-space:pre;">Scale Strokes & Effects</span>
<div class="abs" style="left:234px;top:364.1px;width:11px;height:11px;border:1px solid #d0d0d0;border-radius:1.5px;background:#454545"></div>
<span class="abs" style="left:249.80px;top:364.44px;font-size:12px;line-height:12px;font-weight:400;color:#f0f0f0;letter-spacing:-0.499px;white-space:pre;">Reflect X</span>
<div class="abs" style="left:234px;top:387.3px;width:11px;height:11px;border:1px solid #d0d0d0;border-radius:1.5px;background:#454545"></div>
<span class="abs" style="left:249.80px;top:387.64px;font-size:12px;line-height:12px;font-weight:400;color:#f0f0f0;letter-spacing:-0.474px;white-space:pre;">Reflect Y</span>
<div class="abs" style="left:234px;top:410.9px;width:11px;height:11px;border:1px solid #d0d0d0;border-radius:1.5px;background:#454545"></div>
<span class="abs" style="left:249.80px;top:411.24px;font-size:12px;line-height:12px;font-weight:400;color:#f0f0f0;letter-spacing:-0.777px;white-space:pre;">Random</span>
<div class="abs" style="left:24px;top:434.3px;width:339px;height:1px;background:#666"></div>
<svg class="abs" style="left:23.5px;top:444.3px" width="19" height="19" viewBox="0 0 19 19"><rect x="1.0" y="1.0" width="4" height="4" fill="none" stroke="#cfcfcf" stroke-width="1"/><rect x="7.3" y="1.0" width="4" height="4" fill="none" stroke="#cfcfcf" stroke-width="1"/><rect x="13.6" y="1.0" width="4" height="4" fill="none" stroke="#cfcfcf" stroke-width="1"/><rect x="1.0" y="7.3" width="4" height="4" fill="none" stroke="#cfcfcf" stroke-width="1"/><rect x="7.3" y="7.3" width="4" height="4" fill="#e8e8e8"/><rect x="13.6" y="7.3" width="4" height="4" fill="none" stroke="#cfcfcf" stroke-width="1"/><rect x="1.0" y="13.6" width="4" height="4" fill="none" stroke="#cfcfcf" stroke-width="1"/><rect x="7.3" y="13.6" width="4" height="4" fill="none" stroke="#cfcfcf" stroke-width="1"/><rect x="13.6" y="13.6" width="4" height="4" fill="none" stroke="#cfcfcf" stroke-width="1"/></svg>
<span class="abs" style="left:161.00px;top:448.74px;font-size:12px;line-height:12px;font-weight:400;color:#dedede;letter-spacing:-0.843px;white-space:pre;">Copies</span>
<div class="abs" style="left:197px;top:444.5px;width:53px;height:19.0px;background:#454545;border:1px solid #4c4c4c;border-radius:2px"></div><span class="abs" style="left:201.00px;top:448.74px;font-size:12px;line-height:12px;font-weight:400;color:#ededed;letter-spacing:0.000px;white-space:pre;letter-spacing:-0.2px;">20</span>
<svg class="abs" style="left:15.299999999999955px;top:505.0px" width="11" height="11" viewBox="0 0 11 11"><rect width="11" height="11" rx="1.5" fill="#d6d6d6"/><path d="M2.3 5.6 L4.6 8 L8.8 2.8" fill="none" stroke="#333" stroke-width="1.7"/></svg>
<span class="abs" style="left:31.60px;top:505.34px;font-size:12px;line-height:12px;font-weight:400;color:#f0f0f0;letter-spacing:-0.613px;white-space:pre;">Preview</span>
<div class="abs" style="left:194.29999999999995px;top:499px;width:86px;height:24px;border:2px solid #ececec;border-radius:12px"></div>
<span class="abs" style="left:229.50px;top:505.54px;font-size:12px;line-height:12px;font-weight:400;color:#f4f4f4;letter-spacing:-0.922px;white-space:pre;">OK</span>
<div class="abs" style="left:285.29999999999995px;top:499px;width:87px;height:24px;border:1.3px solid #e0e0e0;border-radius:12px"></div>
<span class="abs" style="left:312.00px;top:505.54px;font-size:12px;line-height:12px;font-weight:400;color:#f4f4f4;letter-spacing:-0.727px;white-space:pre;">Cancel</span>
</div>

<div class="abs" style="left:0;top:0;width:1280px;height:684px;z-index:40;pointer-events:none">
<span class="abs" style="left:333.00px;top:211.45px;font-size:14px;line-height:14px;font-weight:700;color:#e5222b;letter-spacing:-0.050px;white-space:pre;text-shadow:-1px -1px 0 #fff,1px -1px 0 #fff,-1px 1px 0 #fff,1px 1px 0 #fff,0 -1.4px 0 #fff,0 1.4px 0 #fff,-1.4px 0 0 #fff,1.4px 0 0 #fff,2px 3px 3px rgba(0,0,0,.55);">Đối tượng số 2</span>
<span class="abs" style="left:505.60px;top:520.45px;font-size:14px;line-height:14px;font-weight:700;color:#e5222b;letter-spacing:-0.086px;white-space:pre;text-shadow:-1px -1px 0 #fff,1px -1px 0 #fff,-1px 1px 0 #fff,1px 1px 0 #fff,0 -1.4px 0 #fff,0 1.4px 0 #fff,-1.4px 0 0 #fff,1.4px 0 0 #fff,2px 3px 3px rgba(0,0,0,.55);">Số lượng tăng</span>
<svg class="abs" style="left:0;top:0" width="1280" height="684" viewBox="0 0 1280 684"><g style="filter:drop-shadow(1px 2px 1.5px rgba(0,0,0,.35))"><path d="M410.6 233 L791 243.9" stroke="#e8404a" stroke-width="1.3" fill="none"/><path d="M789.5 240.2 L801 244.3 L789.3 248 Z" fill="#ee1c25"/><path d="M599.4 541.6 L1050 497.6" stroke="#e8404a" stroke-width="1.3" fill="none"/><path d="M1048.5 493.3 L1062 496.2 L1049.5 501.5 Z" fill="#ee1c25"/></g></svg>
</div>

</div></body></html>
